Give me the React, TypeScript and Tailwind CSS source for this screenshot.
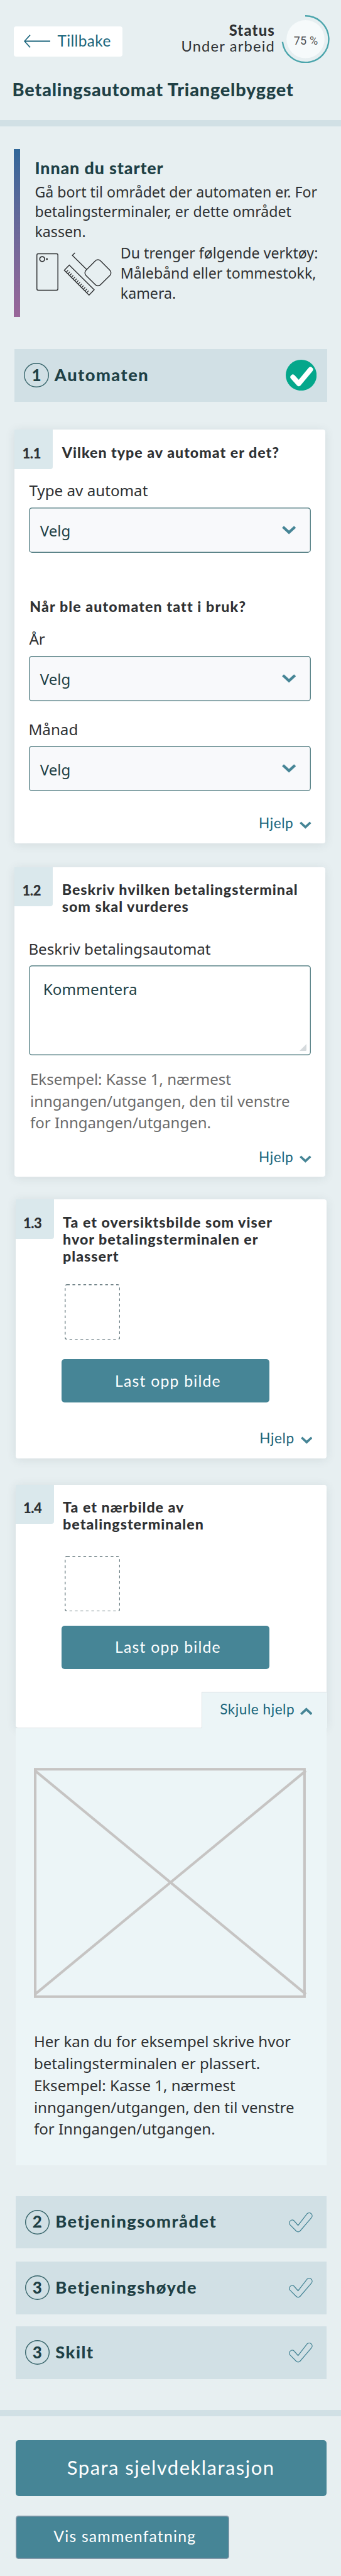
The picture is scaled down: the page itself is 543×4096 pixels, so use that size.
import type { ReactNode } from "react";

const lato = "font-['Lato',sans-serif]";
const noto = "font-['Noto_Sans',sans-serif]";

function Chevron({ className, up = false }: { className: string; up?: boolean }) {
  return (
    <svg viewBox="0 0 31 19" className={className} fill="none" stroke="#468596" strokeWidth="6" strokeLinejoin="miter">
      <path d={up ? "M2.2 16.4 15.5 4.2 28.8 16.4" : "M2.2 2.4 15.5 14.8 28.8 2.4"} />
    </svg>
  );
}

function ProgressRing() {
  return (
    <div className="relative flex h-[76.5px] w-[77px] items-center justify-center">
      <svg viewBox="0 0 77 77" className="absolute inset-0 h-full w-full" fill="none">
        <circle cx="38.5" cy="38.5" r="30.5" fill="#f6fafb" />
        <path d="M38 1.3 A37.2 37.2 0 1 1 1.6 42.8" stroke="#4ba5ac" strokeWidth="2.4" />
      </svg>
      <span className="relative pt-[4px] pl-px font-['Roboto',sans-serif] text-[18px] tracking-[0.2px] text-[#505152]">75 %</span>
    </div>
  );
}

const ticks = Array.from({ length: 13 }, (_, i) => 75.6 + i * 3.75);

function ToolsIcon() {
  return (
    <svg
      viewBox="10 12 166 100"
      className="mt-[13.1px] ml-[2.4px] h-[72.4px] w-[120.2px] shrink-0"
      fill="none"
      stroke="#2f3133"
      strokeWidth="2"
    >
      <rect x="11" y="16.8" width="46.2" height="80.2" rx="3" />
      <circle cx="22.7" cy="28.5" r="5.4" strokeWidth="2.4" />
      <circle cx="33" cy="28.5" r="2" fill="#2f3133" stroke="none" />
      <path d="M94.8 14.8 89 20.4l31.8 31.4" />
      <rect x="122.7" y="36.1" width="45.2" height="45.2" rx="8" transform="rotate(45 145.3 58.7)" />
      <path d="M82.3 41.8 71.3 53l54.4 54.6L137 96Z" />
      {ticks.map((x) => (
        <path key={x} d={`M${x} ${x - 18.3}l4.2 -4.4`} strokeWidth="1.8" />
      ))}
    </svg>
  );
}

function DoneIcon() {
  return (
    <svg viewBox="0 0 49.2 49.2" className="h-[49.2px] w-[49.2px]" fill="none">
      <circle cx="24.6" cy="24.6" r="24.6" fill="#04a78b" />
      <path d="M11.4 27.6 20.8 38 39.4 15.6" stroke="#fff" strokeWidth="8" strokeLinecap="round" strokeLinejoin="round" />
    </svg>
  );
}

function CheckOutline() {
  return (
    <svg viewBox="34 28 54 46" className="mr-[4.3px] h-[33.3px] w-[39.1px]" fill="none" stroke="#468596" strokeWidth="1.7">
      <path d="M37.7 56.2 A6.3 6.3 0 0 1 46.9 47.7 L55.6 57.7 L75.3 32.2 A6.5 6.5 0 0 1 85.2 40.6 L60.2 69.8 Q55.8 74.2 51.2 69.8 Z" />
    </svg>
  );
}

function StepBar({ n, title, className, children }: { n: string; title: string; className: string; children: ReactNode }) {
  return (
    <div className={`${lato} flex shrink-0 items-center bg-[#d1e0e5] pr-[17.3px] pl-[15.2px] text-[#204045] ${className}`}>
      <div className="flex h-[39.2px] w-[39.2px] items-center justify-center rounded-full text-[26px] leading-none font-black shadow-[inset_0_0_0_1.4px_#36646a]">
        <span className="-mt-[2px]">{n}</span>
      </div>
      <h2 className="-mt-[2px] ml-[9.3px] flex-1 text-[27.2px] leading-[32px] font-black tracking-[1.5px]">{title}</h2>
      {children}
    </div>
  );
}

const shadow = "shadow-[0_2px_16px_rgba(40,60,65,0.10)]";

function Card({ n, lines, className, children }: { n: string; lines: string[]; className: string; children: ReactNode }) {
  return (
    <section className={`flex w-[495.2px] shrink-0 flex-col rounded-[4px] rounded-tl-none bg-white ${shadow} ${className}`}>
      <div className={`${lato} flex items-start font-black text-[#2f3133]`}>
        <div className="h-[62.3px] w-[61px] rounded-br-[4px] bg-[#dae8ec] pt-[24.6px] pl-[12.3px] text-[22px] leading-[26px] tracking-[-0.4px]">
          {n}
        </div>
        <h3 className="mt-[22.5px] ml-[14.5px] text-[23.2px] leading-[27.2px] tracking-[1px]">
          {lines.map((l) => (
            <span key={l} className="block whitespace-nowrap">
              {l}
            </span>
          ))}
        </h3>
      </div>
      {children}
    </section>
  );
}

function Label({ className, children }: { className: string; children: ReactNode }) {
  return (
    <label className={`${noto} mx-[23.2px] block h-[34px] pt-[0.7px] text-[24.2px] leading-[34px] text-[#2f3133] ${className}`}>
      {children}
    </label>
  );
}

function Select({ className }: { className: string }) {
  return (
    <div
      className={`${noto} mx-[23.2px] flex h-[72.4px] shrink-0 items-center justify-between rounded-[5px] bg-[#f8f9fb] pr-[23.9px] pl-[17.4px] text-[24px] text-[#204045] shadow-[inset_0_0_0_1.4px_#5a8388] ${className}`}
    >
      <span className="pt-[3px]">Velg</span>
      <Chevron className="h-[13.7px] w-[22.3px]" />
    </div>
  );
}

function Help({ className }: { className: string }) {
  return (
    <button className={`${lato} mr-[22.5px] flex h-[28px] items-center self-end text-[22.6px] leading-[28px] tracking-[0.6px] text-[#1a657c] ${className}`}>
      Hjelp
      <Chevron className="mt-[6px] ml-[9.8px] h-[12px] w-[18.7px]" />
    </button>
  );
}

function Upload({ className, buttonClass }: { className: string; buttonClass: string }) {
  return (
    <>
      <svg viewBox="0 0 88.3 88.3" className={`ml-[78.3px] h-[88.3px] w-[88.3px] shrink-0 ${className}`} fill="none">
        <rect x="0.7" y="0.7" width="86.9" height="86.9" rx="3" stroke="#6a7d82" strokeWidth="1.4" strokeDasharray="4.3 4.4" />
      </svg>
      <button
        className={`${lato} ml-[73.7px] flex h-[69.4px] w-[330.4px] shrink-0 items-center justify-center rounded-[5px] bg-[#468596] pb-px pl-[8px] text-[24.8px] tracking-[1.2px] text-white ${buttonClass}`}
      >
        Last opp bilde
      </button>
    </>
  );
}

export default function App() {
  return (
    <main className="flex h-[4096px] w-[543px] flex-col overflow-hidden bg-[#e7eff1]">
      <header className="flex h-[191.1px] shrink-0 flex-col pt-[23.8px]">
        <div className="flex h-[76.5px] pr-[18px] pl-[21.8px]">
          <button className={`${lato} mt-[18.1px] flex h-[48px] w-[173.5px] items-center rounded-[4px] bg-white pl-[15.9px] text-[24.4px] tracking-[0.4px] text-[#1a657c]`}>
            <svg viewBox="0 0 42 21" className="mt-[-1px] mr-[11.8px] h-[21px] w-[42px]" fill="none" stroke="#1a657c" strokeWidth="1.6">
              <path d="M1 10.5H42" strokeWidth="2" />
              <path d="M10 0.6 1 10.5 10 20.4" />
            </svg>
            <span className="-mt-[2px]">Tillbake</span>
          </button>
          <div className={`${lato} mt-[12.3px] mr-[10px] ml-auto text-right text-[23.7px] leading-[24.8px] tracking-[1.18px] text-[#2f3133]`}>
            <p className="font-black">Status</p>
            <p>Under arbeid</p>
          </div>
          <ProgressRing />
        </div>
        <h1 className={`${lato} mt-[25.2px] ml-[19.6px] text-[28.8px] leading-[34px] font-black tracking-[0.83px] whitespace-nowrap text-[#204045]`}>
          Betalingsautomat Triangelbygget
        </h1>
      </header>
      <div className="h-[10.1px] shrink-0 bg-[#d1e0e5]" />

      <section className="mt-[36.2px] ml-[21.8px] flex h-[266.4px] shrink-0">
        <div className="w-[10.1px] shrink-0 bg-linear-to-b from-[#306799] to-[#996699]" />
        <div className={`${noto} ml-[23.6px] pt-[13.2px] text-[23.17px] leading-[31.9px] whitespace-nowrap text-[#2f3133]`}>
          <h2 className={`${lato} text-[26.8px] leading-[32px] font-black tracking-[0.9px] text-[#204045]`}>Innan du starter</h2>
          <p className="mt-[7px]">
            Gå bort til området der automaten er. For
            <br />
            betalingsterminaler, er dette området
            <br />
            kassen.
          </p>
          <div className="mt-[1.5px] flex items-start">
            <ToolsIcon />
            <p className="ml-[13.8px]">
              Du trenger følgende verktøy:
              <br />
              Målebånd eller tommestokk,
              <br />
              kamera.
            </p>
          </div>
        </div>
      </section>

      <StepBar n="1" title="Automaten" className="mt-[51px] ml-[23.2px] h-[84px] w-[498px]">
        <DoneIcon />
      </StepBar>

      <Card n="1.1" lines={["Vilken type av automat er det?"]} className="mt-[44.7px] ml-[23.2px] h-[657.8px]">
        <Label className="mt-[16.9px]">Type av automat</Label>
        <Select className="mt-[10px]" />
        <h4 className={`${lato} mt-[71.2px] ml-[24px] text-[23.2px] leading-[28px] font-black tracking-[1.1px] text-[#2f3133]`}>
          Når ble automaten tatt i bruk?
        </h4>
        <Label className="mt-[20.5px]">År</Label>
        <Select className="mt-[10px]" />
        <Label className="mt-[27.2px] -indent-px">Månad</Label>
        <Select className="mt-[9.7px]" />
        <Help className="mt-[37px]" />
      </Card>

      <Card n="1.2" lines={["Beskriv hvilken betalingsterminal", "som skal vurderes"]} className="mt-[37.5px] ml-[23.2px] h-[492.4px]">
        <Label className="mt-[35.5px] -indent-px">Beskriv betalingsautomat</Label>
        <div
          className={`${noto} mx-[23.2px] mt-[10.1px] flex h-[143px] shrink-0 justify-between rounded-[5px] pt-[20.5px] pr-[7.2px] pb-[7px] pl-[22.4px] text-[24.2px] leading-[34px] tracking-[0.1px] text-[#204045] shadow-[inset_0_0_0_1.4px_#5a8388]`}
        >
          Kommentera
          <svg viewBox="0 0 11 11" className="h-[11px] w-[11px] self-end">
            <path d="M11 0V9.5Q11 11 9.5 11H0Z" fill="#d5dadd" />
          </svg>
        </div>
        <p className={`${noto} mt-[20.7px] ml-[24.8px] text-[24px] leading-[34.7px] whitespace-nowrap text-[#6b6b6b]`}>
          Eksempel: Kasse 1, nærmest
          <br />
          inngangen/utgangen, den til venstre
          <br />
          for Inngangen/utgangen.
        </p>
        <Help className="mt-[22.8px]" />
      </Card>

      <Card
        n="1.3"
        lines={["Ta et oversiktsbilde som viser", "hvor betalingsterminalen er", "plassert"]}
        className="mt-[36.2px] ml-[24.6px] h-[411.4px]"
      >
        <Upload className="mt-[30.7px]" buttonClass="mt-[30.5px]" />
        <Help className="mt-[42.7px]" />
      </Card>

      <Card n="1.4" lines={["Ta et nærbilde av", "betalingsterminalen"]} className="mt-[42px] ml-[24.6px] h-[386.6px]">
        <Upload className="mt-[36px]" buttonClass="mt-[22.8px]" />
        <button
          className={`${lato} relative z-10 mt-[35.8px] -mr-[1.4px] flex h-[58.4px] w-[200.2px] shrink-0 items-start justify-end self-end border-t border-l border-[#dbe0e3] bg-[#ecf5f7] pt-[13.4px] pr-[23.9px] text-[22.6px] leading-[28px] tracking-[0.53px] text-[#1a657c]`}
        >
          Skjule hjelp
          <Chevron up className="mt-[10.5px] ml-[8.5px] h-[12.4px] w-[19.6px]" />
        </button>
      </Card>
      <section className="relative ml-[24.6px] flex h-[696px] w-[495.2px] shrink-0 flex-col border-t border-[#dbe0e3] bg-[#ecf5f7]">
        <svg viewBox="0 0 435 366" className="mt-[62.8px] ml-[29.8px] h-[366px] w-[435px] shrink-0" fill="none" stroke="#c6c4c3" strokeWidth="4.1">
          <rect x="2.05" y="2.2" width="428.8" height="361.6" />
          <path d="M2 4.6 433 359.8M2 359.8 433 4.6" />
        </svg>
        <p className={`${noto} mt-[52.2px] ml-[29.3px] text-[24.07px] leading-[34.8px] whitespace-nowrap text-[#2f3133]`}>
          Her kan du for eksempel skrive hvor
          <br />
          betalingsterminalen er plassert.
          <br />
          Eksempel: Kasse 1, nærmest
          <br />
          inngangen/utgangen, den til venstre
          <br />
          for Inngangen/utgangen.
        </p>
      </section>

      <StepBar n="2" title="Betjeningsområdet" className="mt-[48.2px] ml-[24.6px] h-[83.9px] w-[495.2px]">
        <CheckOutline />
      </StepBar>
      <StepBar n="3" title="Betjeningshøyde" className="mt-[20.4px] ml-[24.6px] h-[83.9px] w-[495.2px]">
        <CheckOutline />
      </StepBar>
      <StepBar n="3" title="Skilt" className="mt-[19px] ml-[24.6px] h-[83.9px] w-[495.2px]">
        <CheckOutline />
      </StepBar>

      <div className="mt-[49.3px] h-[10px] shrink-0 bg-[#d1e0e5]" />
      <footer className={`${lato} flex flex-col pl-[24.6px] text-white`}>
        <button className="mt-[37.9px] flex h-[89.7px] w-[495.2px] items-center justify-center rounded-[5px] bg-[#468596] pb-[2px] text-[31px] tracking-[1.48px]">
          Spara sjelvdeklarasjon
        </button>
        <button className="mt-[30.2px] flex h-[69.7px] w-[340.4px] items-center justify-center rounded-[5px] bg-[#468596] pb-[3px] pl-[8px] text-[24.8px] tracking-[1.2px] shadow-[inset_0_0_0_1.4px_#8b9bac]">
          Vis sammenfatning
        </button>
      </footer>
    </main>
  );
}
